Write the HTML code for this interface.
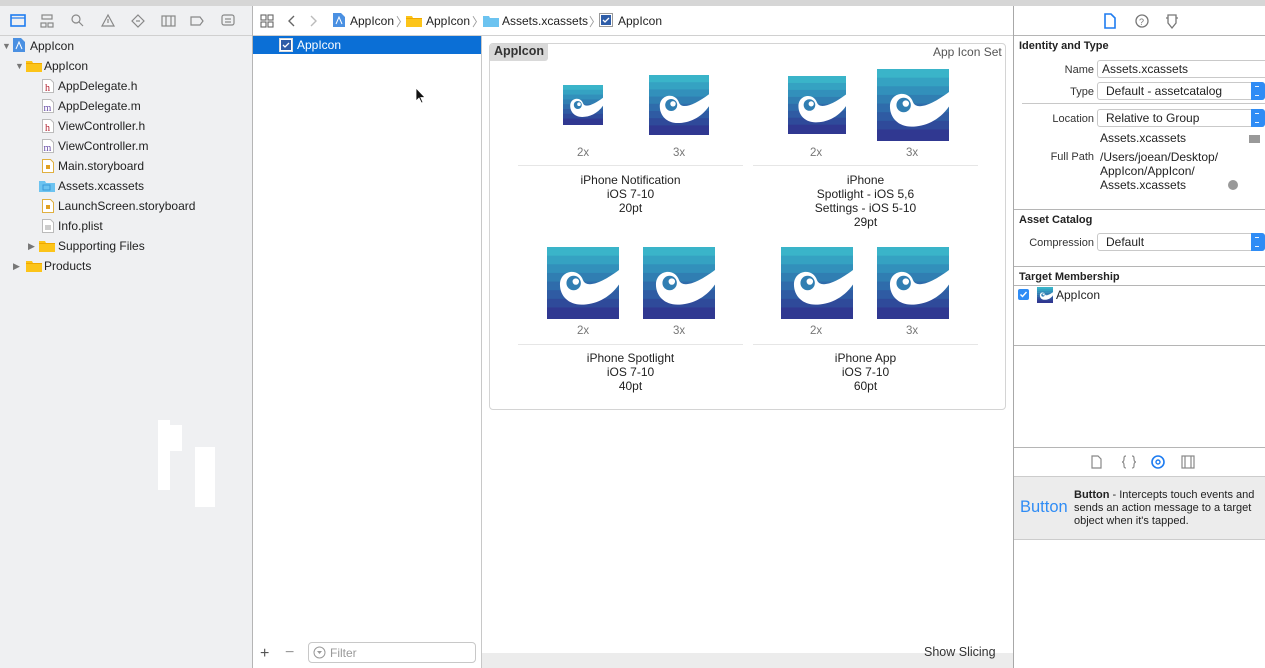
<!DOCTYPE html>
<html><head><meta charset="utf-8"><style>
*{margin:0;padding:0;box-sizing:border-box}
body{width:1265px;height:668px;overflow:hidden;position:relative;font-family:"Liberation Sans",sans-serif;font-size:12px;color:#222;background:#fff}
.a{position:absolute}
.t{position:absolute;white-space:nowrap}
.hl{position:absolute;height:1px;background:#c8c8c8}
.vl{position:absolute;width:1px;background:#b5b5b5}
.c{text-align:center;line-height:14px}
.sc{color:#777;font-size:11.5px}
.lbl{text-align:right;width:80px;color:#333;font-size:11px}
.fld{position:absolute;height:18px;border:1px solid #c9c9c9;border-radius:3px;background:#fff;padding:1px 8px;font-size:12px}
.pop .ar{position:absolute;right:-1px;top:-1px;width:14px;height:18px;background:#2f8cf5;border-radius:0 3px 3px 0}
.pop .ar:after{content:"";position:absolute;left:4px;top:4px;width:4px;height:8px;border-top:1px solid #fff;border-bottom:1px solid #fff;opacity:.9}
</style></head><body>
<svg width="0" height="0" style="position:absolute"><defs>
<symbol id="ic" viewBox="0 0 100 100">
<rect y="0" width="100" height="13" fill="#3ab4c9"/><rect y="12" width="100" height="13" fill="#35a2c2"/>
<rect y="24" width="100" height="13" fill="#3290bb"/><rect y="36" width="100" height="13" fill="#307eb2"/>
<rect y="48" width="100" height="13" fill="#2f6cab"/><rect y="60" width="100" height="13" fill="#2f5ba3"/>
<rect y="72" width="100" height="13" fill="#2f4a9a"/><rect y="84" width="100" height="16" fill="#303891"/>
<path d="M18,52 C18,32 44,28 50,46 C55,58 76,50 100,32 L100,52 C86,72 66,80 48,80 C30,80 18,68 18,52 Z" fill="#fff"/>
<circle cx="37" cy="50" r="10" fill="#307eb2"/><circle cx="40" cy="48" r="4.5" fill="#fff"/>
</symbol>
<symbol id="fold" viewBox="0 0 16 12"><path d="M0,1h6l1,2h9v9H0z" fill="#fcc419"/><rect y="3" width="16" height="1" fill="#f0a800"/></symbol>
</defs></svg>

<div class="a" style="left:0;top:0;width:1265px;height:6px;background:#d6d6d6"></div>

<div class="a" style="left:0;top:6px;width:252px;height:662px;background:#eff0f2"></div>
<div class="a" style="left:158px;top:420px;width:12px;height:70px;background:#fff"></div>
<div class="a" style="left:170px;top:425px;width:12px;height:26px;background:#fff"></div>
<div class="a" style="left:195px;top:447px;width:20px;height:60px;background:#fff"></div>
<div class="hl" style="left:0;top:35px;width:252px;background:#d0d0d0"></div>
<div class="vl" style="left:252px;top:6px;height:662px"></div>
<svg class="a" style="left:10px;top:13px" width="230" height="16" fill="none" stroke="#888" stroke-width="1.2">
<rect x="1" y="2" width="14" height="11" stroke="#1e7cf0" stroke-width="1.6"/><line x1="1" y1="5" x2="15" y2="5" stroke="#1e7cf0"/>
<rect x="32" y="2" width="10" height="4"/><rect x="31" y="10" width="5" height="4"/><rect x="38" y="10" width="5" height="4"/>
<circle cx="66" cy="6" r="4"/><line x1="69" y1="9" x2="73" y2="13"/>
<path d="M98 2 L92 13 H104 Z"/><line x1="98" y1="6" x2="98" y2="10"/>
<path d="M128 2 L134 8 L128 14 L122 8 Z"/><line x1="126" y1="8" x2="130" y2="8"/>
<rect x="152" y="3" width="13" height="10"/><line x1="156" y1="3" x2="156" y2="13"/><line x1="161" y1="3" x2="161" y2="13"/>
<path d="M181 4 H190 L193 8 L190 12 H181 Z"/>
<rect x="212" y="2" width="12" height="10" rx="2"/><line x1="215" y1="6" x2="221" y2="6"/><line x1="215" y1="9" x2="221" y2="9"/>
</svg>
<div class="t" style="left:2px;top:41px;color:#777;font-size:9px">▼</div>
<svg class="a" style="left:13px;top:38px" width="12" height="14"><path d="M0,0h8l4,4v10H0z" fill="#4a90e2"/><path d="M3,11l3-7 3,7" stroke="#fff" fill="none"/></svg>
<div class="t" style="left:30px;top:39px">AppIcon</div>
<div class="t" style="left:15px;top:61px;color:#777;font-size:9px">▼</div>
<svg class="a" style="left:26px;top:60px" width="16" height="12"><use href="#fold"/></svg>
<div class="t" style="left:44px;top:59px">AppIcon</div>
<svg class="a" style="left:42px;top:79px" width="12" height="14"><path d="M0.5,.5h8l3,3v10h-11z" fill="#fff" stroke="#bbb"/><text x="3" y="12" font-family="Liberation Serif" font-size="10" fill="#b01e2e">h</text></svg>
<div class="t" style="left:58px;top:79px">AppDelegate.h</div>
<svg class="a" style="left:42px;top:99px" width="12" height="14"><path d="M0.5,.5h8l3,3v10h-11z" fill="#fff" stroke="#bbb"/><text x="1.5" y="12" font-family="Liberation Serif" font-size="10" fill="#6a4fa8">m</text></svg>
<div class="t" style="left:58px;top:99px">AppDelegate.m</div>
<svg class="a" style="left:42px;top:119px" width="12" height="14"><path d="M0.5,.5h8l3,3v10h-11z" fill="#fff" stroke="#bbb"/><text x="3" y="12" font-family="Liberation Serif" font-size="10" fill="#b01e2e">h</text></svg>
<div class="t" style="left:58px;top:119px">ViewController.h</div>
<svg class="a" style="left:42px;top:139px" width="12" height="14"><path d="M0.5,.5h8l3,3v10h-11z" fill="#fff" stroke="#bbb"/><text x="1.5" y="12" font-family="Liberation Serif" font-size="10" fill="#6a4fa8">m</text></svg>
<div class="t" style="left:58px;top:139px">ViewController.m</div>
<svg class="a" style="left:42px;top:159px" width="12" height="14"><path d="M0.5,.5h8l3,3v10h-11z" fill="#fff" stroke="#e0b040"/><rect x="4" y="6" width="4" height="4" fill="#e0a020"/></svg>
<div class="t" style="left:58px;top:159px">Main.storyboard</div>
<svg class="a" style="left:39px;top:180px" width="16" height="12"><path d="M0,1h6l1,2h9v9H0z" fill="#6cc3f0"/><rect x="4" y="5" width="7" height="5" fill="none" stroke="#3a9ad8"/></svg>
<div class="t" style="left:58px;top:179px">Assets.xcassets</div>
<svg class="a" style="left:42px;top:199px" width="12" height="14"><path d="M0.5,.5h8l3,3v10h-11z" fill="#fff" stroke="#e0b040"/><rect x="4" y="6" width="4" height="4" fill="#e0a020"/></svg>
<div class="t" style="left:58px;top:199px">LaunchScreen.storyboard</div>
<svg class="a" style="left:42px;top:219px" width="12" height="14"><path d="M0.5,.5h8l3,3v10h-11z" fill="#fff" stroke="#bbb"/><rect x="3" y="6" width="6" height="5" fill="#ccc"/></svg>
<div class="t" style="left:58px;top:219px">Info.plist</div>
<div class="t" style="left:28px;top:241px;color:#777;font-size:9px">▶</div>
<svg class="a" style="left:39px;top:240px" width="16" height="12"><use href="#fold"/></svg>
<div class="t" style="left:58px;top:239px">Supporting Files</div>
<div class="t" style="left:13px;top:261px;color:#777;font-size:9px">▶</div>
<svg class="a" style="left:26px;top:260px" width="16" height="12"><use href="#fold"/></svg>
<div class="t" style="left:44px;top:259px">Products</div>

<div class="hl" style="left:253px;top:35px;width:760px;background:#d0d0d0"></div>
<svg class="a" style="left:260px;top:14px" width="70" height="14" fill="none" stroke="#666" stroke-width="1.1">
<rect x="1" y="1" width="5" height="5"/><rect x="8" y="1" width="5" height="5"/><rect x="1" y="8" width="5" height="5"/><rect x="8" y="8" width="5" height="5"/>
<path d="M34 2 L29 7 L34 12" stroke-width="1.4"/><path d="M51 2 L56 7 L51 12" stroke="#bbb" stroke-width="1.4"/>
</svg>
<svg class="a" style="left:333px;top:13px" width="12" height="14"><path d="M0,0h8l4,4v10H0z" fill="#4a90e2"/><path d="M3,11l3-7 3,7" stroke="#fff" fill="none"/></svg>
<div class="t" style="left:350px;top:14px">AppIcon</div><div class="t" style="left:396px;top:13px;color:#999">〉</div>
<svg class="a" style="left:406px;top:15px" width="16" height="12"><use href="#fold"/></svg>
<div class="t" style="left:426px;top:14px">AppIcon</div><div class="t" style="left:472px;top:13px;color:#999">〉</div>
<svg class="a" style="left:483px;top:15px" width="16" height="12"><path d="M0,1h6l1,2h9v9H0z" fill="#6cc3f0"/></svg>
<div class="t" style="left:502px;top:14px">Assets.xcassets</div><div class="t" style="left:589px;top:13px;color:#999">〉</div>
<svg class="a" style="left:599px;top:13px" width="14" height="14"><rect x=".5" y=".5" width="13" height="13" fill="#fff" stroke="#999"/><rect x="2" y="2" width="10" height="10" fill="#2e5da8"/><path d="M4 7l2 2 4-4" stroke="#fff" fill="none" stroke-width="1.3"/></svg>
<div class="t" style="left:618px;top:14px">AppIcon</div>

<div class="a" style="left:253px;top:36px;width:228px;height:18px;background:#0b6fd6"></div>
<svg class="a" style="left:279px;top:38px" width="14" height="14"><rect x=".5" y=".5" width="13" height="13" fill="#fff" stroke="#ddd"/><rect x="2" y="2" width="10" height="10" fill="#2e5da8"/><path d="M4 7l2 2 4-4" stroke="#fff" fill="none" stroke-width="1.3"/></svg>
<div class="t" style="left:297px;top:38px;color:#fff">AppIcon</div>
<div class="vl" style="left:481px;top:36px;height:632px;background:#c8c8c8"></div>
<svg class="a" style="left:415px;top:87px" width="12" height="18"><path d="M1,1 L1,14 L4,11 L6.5,16 L8,15.3 L5.8,10.5 L10,10.5 Z" fill="#111" stroke="#fff" stroke-width=".8"/></svg>
<div class="t" style="left:260px;top:645px;font-size:16px;color:#555">+</div>
<div class="t" style="left:285px;top:644px;font-size:16px;color:#999">−</div>
<div class="a" style="left:308px;top:642px;width:168px;height:21px;border:1px solid #c8c8c8;border-radius:4px;background:#fff"></div>
<svg class="a" style="left:313px;top:646px" width="13" height="13"><circle cx="6.5" cy="6.5" r="5.5" fill="none" stroke="#999"/><path d="M4 5h5l-2.5 3z" fill="#999"/></svg>
<div class="t" style="left:330px;top:646px;color:#999">Filter</div>

<div class="a" style="left:489px;top:43px;width:517px;height:367px;border:1px solid #d4d4d4;border-radius:4px;background:#fff"></div>
<div class="a" style="left:490px;top:44px;width:58px;height:17px;background:#d9d9d9;border-radius:3px 0 3px 0"></div>
<div class="t" style="left:494px;top:44px;font-weight:bold;font-size:12.5px;color:#333">AppIcon</div>
<div class="t" style="left:933px;top:45px;color:#555">App Icon Set</div>

<svg class="a" style="left:563px;top:85px" width="40" height="40"><use href="#ic"/></svg>
<svg class="a" style="left:649px;top:75px" width="60" height="60"><use href="#ic"/></svg>
<svg class="a" style="left:788px;top:76px" width="58" height="58"><use href="#ic"/></svg>
<svg class="a" style="left:877px;top:69px" width="72" height="72"><use href="#ic"/></svg>
<div class="t sc" style="left:577px;top:147px">2x</div><div class="t sc" style="left:673px;top:147px">3x</div>
<div class="t sc" style="left:810px;top:147px">2x</div><div class="t sc" style="left:906px;top:147px">3x</div>
<div class="hl" style="left:518px;top:165px;width:225px;background:#e6e6e6"></div>
<div class="hl" style="left:753px;top:165px;width:225px;background:#e6e6e6"></div>
<div class="t c" style="left:518px;top:173px;width:225px">iPhone Notification<br>iOS 7-10<br>20pt</div>
<div class="t c" style="left:753px;top:173px;width:225px">iPhone<br>Spotlight - iOS 5,6<br>Settings - iOS 5-10<br>29pt</div>

<svg class="a" style="left:547px;top:247px" width="72" height="72"><use href="#ic"/></svg>
<svg class="a" style="left:643px;top:247px" width="72" height="72"><use href="#ic"/></svg>
<svg class="a" style="left:781px;top:247px" width="72" height="72"><use href="#ic"/></svg>
<svg class="a" style="left:877px;top:247px" width="72" height="72"><use href="#ic"/></svg>
<div class="t sc" style="left:577px;top:325px">2x</div><div class="t sc" style="left:673px;top:325px">3x</div>
<div class="t sc" style="left:810px;top:325px">2x</div><div class="t sc" style="left:906px;top:325px">3x</div>
<div class="hl" style="left:518px;top:344px;width:225px;background:#e6e6e6"></div>
<div class="hl" style="left:753px;top:344px;width:225px;background:#e6e6e6"></div>
<div class="t c" style="left:518px;top:351px;width:225px">iPhone Spotlight<br>iOS 7-10<br>40pt</div>
<div class="t c" style="left:753px;top:351px;width:225px">iPhone App<br>iOS 7-10<br>60pt</div>

<div class="a" style="left:482px;top:653px;width:531px;height:15px;background:#ececec"></div>
<div class="t" style="left:924px;top:645px;font-size:12.5px;color:#333">Show Slicing</div>

<div class="vl" style="left:1013px;top:6px;height:662px;background:#a8a8a8"></div>
<svg class="a" style="left:1100px;top:12px" width="90" height="18" fill="none" stroke-width="1.3">
<path d="M5 2h6l4 4v10H5z" stroke="#1e7cf0" stroke-width="1.6"/>
<circle cx="42" cy="9" r="6" stroke="#777"/><text x="39" y="13" font-size="9" fill="#777" stroke="none" font-family="Liberation Sans">?</text>
<path d="M68 3h8v8l-4 5-4-5z M66 6h2 M76 6h2" stroke="#777"/>
</svg>
<div class="hl" style="left:1014px;top:35px;width:251px;background:#b5b5b5"></div>
<div class="t" style="left:1019px;top:40px;font-weight:bold;font-size:11px">Identity and Type</div>
<div class="t lbl" style="left:1014px;top:64px">Name</div>
<div class="fld" style="left:1097px;top:60px;width:175px;border-right:none;padding-left:4px">Assets.xcassets</div>
<div class="t lbl" style="left:1014px;top:86px">Type</div>
<div class="fld pop" style="left:1097px;top:82px;width:168px">Default - assetcatalog<div class="ar"></div></div>
<div class="hl" style="left:1022px;top:103px;width:243px"></div>
<div class="t lbl" style="left:1014px;top:113px">Location</div>
<div class="fld pop" style="left:1097px;top:109px;width:168px">Relative to Group<div class="ar"></div></div>
<div class="t" style="left:1100px;top:131px">Assets.xcassets</div>
<div class="a" style="left:1249px;top:135px;width:11px;height:8px;background:#999"></div>
<div class="t lbl" style="left:1014px;top:151px">Full Path</div>
<div class="t" style="left:1100px;top:150px;line-height:14px">/Users/joean/Desktop/<br>AppIcon/AppIcon/<br>Assets.xcassets</div>
<div class="a" style="left:1228px;top:180px;width:10px;height:10px;border-radius:50%;background:#999"></div>
<div class="hl" style="left:1014px;top:209px;width:251px;background:#b5b5b5"></div>
<div class="t" style="left:1019px;top:214px;font-weight:bold;font-size:11px">Asset Catalog</div>
<div class="t lbl" style="left:1014px;top:237px">Compression</div>
<div class="fld pop" style="left:1097px;top:233px;width:168px">Default<div class="ar"></div></div>
<div class="hl" style="left:1014px;top:266px;width:251px;background:#b5b5b5"></div>
<div class="t" style="left:1019px;top:271px;font-weight:bold;font-size:11px">Target Membership</div>
<div class="hl" style="left:1014px;top:285px;width:251px;background:#b5b5b5"></div>
<div class="a" style="left:1018px;top:289px;width:11px;height:11px;border-radius:2px;background:#2f8cf5"></div>
<svg class="a" style="left:1018px;top:289px" width="11" height="11"><path d="M2.5 5.5l2 2 4-4.5" stroke="#fff" fill="none" stroke-width="1.4"/></svg>
<svg class="a" style="left:1037px;top:287px" width="16" height="16"><use href="#ic"/></svg>
<div class="t" style="left:1056px;top:288px">AppIcon</div>
<div class="hl" style="left:1014px;top:345px;width:251px;background:#b5b5b5"></div>
<div class="hl" style="left:1014px;top:447px;width:251px;background:#b5b5b5"></div>
<svg class="a" style="left:1088px;top:454px" width="110" height="16" fill="none" stroke="#888" stroke-width="1.2">
<path d="M4 2h6l3 3v9H4z"/>
<path d="M38 2c-2 0-2 1-2 3s-1 3-2 3c1 0 2 1 2 3s0 3 2 3 M44 2c2 0 2 1 2 3s1 3 2 3c-1 0-2 1-2 3s0 3-2 3"/>
<circle cx="70" cy="8" r="6" stroke="#1e7cf0" stroke-width="1.6"/><circle cx="70" cy="8" r="2" stroke="#1e7cf0" stroke-width="1.4"/>
<rect x="94" y="2" width="12" height="12"/><line x1="97" y1="2" x2="97" y2="14"/><line x1="103" y1="2" x2="103" y2="14"/>
</svg>
<div class="a" style="left:1014px;top:476px;width:251px;height:64px;background:#ececec;border-top:1px solid #ccc;border-bottom:1px solid #ccc"></div>
<div class="t" style="left:1020px;top:498px;font-size:16.5px;color:#2f8cf5">Button</div>
<div class="t" style="left:1074px;top:489px;line-height:13px;font-size:11px"><b>Button</b> - Intercepts touch events and<br>sends an action message to a target<br>object when it's tapped.</div>
</body></html>
